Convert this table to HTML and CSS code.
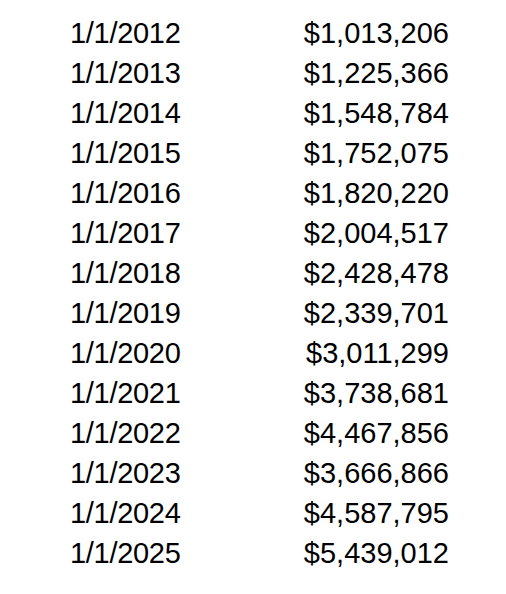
FILE: index.html
```html
<!DOCTYPE html>
<html>
<head>
<meta charset="utf-8">
<link rel="stylesheet" href="styles.css">
</head>
<body>
<div class="table">
  <div class="row"><span class="date">1/1/2012</span><span class="amt">$1,013,206</span></div>
  <div class="row"><span class="date">1/1/2013</span><span class="amt">$1,225,366</span></div>
  <div class="row"><span class="date">1/1/2014</span><span class="amt">$1,548,784</span></div>
  <div class="row"><span class="date">1/1/2015</span><span class="amt">$1,752,075</span></div>
  <div class="row"><span class="date">1/1/2016</span><span class="amt">$1,820,220</span></div>
  <div class="row"><span class="date">1/1/2017</span><span class="amt">$2,004,517</span></div>
  <div class="row"><span class="date">1/1/2018</span><span class="amt">$2,428,478</span></div>
  <div class="row"><span class="date">1/1/2019</span><span class="amt">$2,339,701</span></div>
  <div class="row"><span class="date">1/1/2020</span><span class="amt">$3,011,299</span></div>
  <div class="row"><span class="date">1/1/2021</span><span class="amt">$3,738,681</span></div>
  <div class="row"><span class="date">1/1/2022</span><span class="amt">$4,467,856</span></div>
  <div class="row"><span class="date">1/1/2023</span><span class="amt">$3,666,866</span></div>
  <div class="row"><span class="date">1/1/2024</span><span class="amt">$4,587,795</span></div>
  <div class="row"><span class="date">1/1/2025</span><span class="amt">$5,439,012</span></div>
</div>
</body>
</html>
```
FILE: styles.css
```css
html, body {
  margin: 0;
  padding: 0;
  background: #ffffff;
}
body {
  font-family: "Liberation Sans", Arial, sans-serif;
  color: #000000;
}
.table {
  padding: 13px 0 0 70px;
  width: 379px;
}
.row {
  display: flex;
  justify-content: space-between;
  font-size: 29px;
  line-height: 40px;
  height: 40px;
}
.date {
  letter-spacing: -0.3px;
}
```
